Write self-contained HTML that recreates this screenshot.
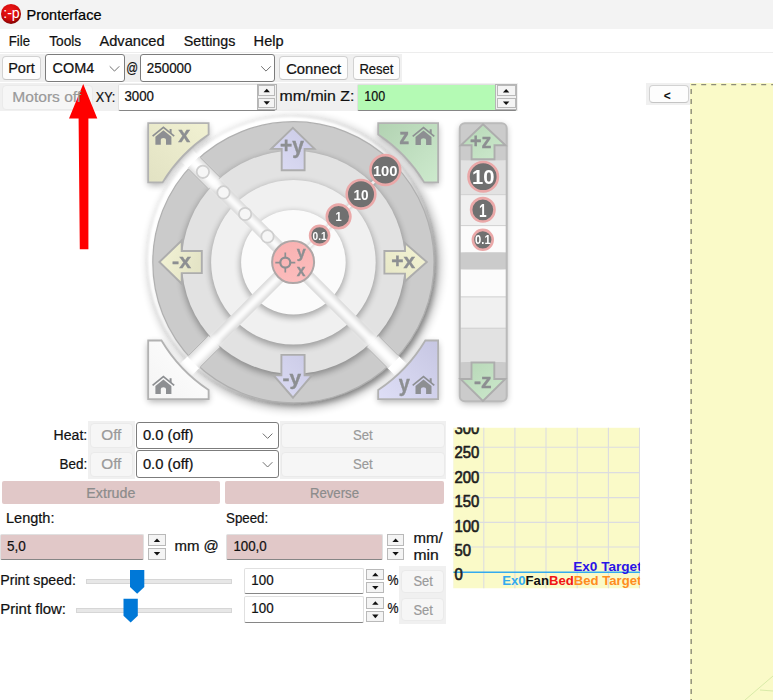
<!DOCTYPE html>
<html><head><meta charset="utf-8"><title>Pronterface</title>
<style>
html,body{margin:0;padding:0;background:#fff;overflow:hidden}
body{width:773px;height:700px;position:relative;font-family:"Liberation Sans",sans-serif}
.b{position:absolute;box-sizing:border-box}
.btn{background:#fdfdfd;border:1px solid #d2d2d2;border-bottom-color:#c4c4c4;border-radius:4px}
.btn.dis{background:#f6f6f6;border-color:#eaeaea}
.combo{background:#fff;border:1px solid #7c7c7c;border-radius:3px}
.spin{background:#fff;border:1px solid #e0e0e0;border-bottom:1.5px solid #868686;border-radius:2px}
.sb{background:#f4f4f4;border:1px solid #b9b9b9}
svg{position:absolute;left:0;top:0}
svg text{font-family:"Liberation Sans",sans-serif}
</style></head><body>
<div class="b " style="left:0px;top:0px;width:773.0px;height:29.0px;background:#f3f3f3"></div>
<div class="b " style="left:0px;top:52px;width:773.0px;height:1.0px;background:#ededed"></div>
<div class="b " style="left:0px;top:54px;width:402.0px;height:28.0px;background:#f0f0f0"></div>
<div class="b " style="left:0px;top:83px;width:518.0px;height:28.0px;background:#f0f0f0"></div>
<div class="b btn" style="left:2px;top:56px;width:39.0px;height:24.0px;"></div>
<div class="b combo" style="left:45px;top:54px;width:80.0px;height:28.0px;"></div>
<div class="b combo" style="left:140px;top:54px;width:135.0px;height:28.0px;"></div>
<div class="b btn" style="left:279px;top:56px;width:69.0px;height:24.0px;"></div>
<div class="b btn" style="left:353px;top:56px;width:47.0px;height:24.0px;"></div>
<div class="b btn dis" style="left:2px;top:85px;width:91.0px;height:25.0px;"></div>
<div class="b spin" style="left:118px;top:84px;width:158.0px;height:27.0px;"></div>
<div class="b spin" style="left:357px;top:84px;width:160.0px;height:27.0px;background:#b4fab4"></div>
<div class="b " style="left:646px;top:83px;width:44.0px;height:22.0px;background:#f0f0f0"></div>
<div class="b btn" style="left:649px;top:85px;width:40.0px;height:18.0px;"></div>
<div class="b " style="left:257px;top:84px;width:20.0px;height:26.0px;background:#f0f0f0;border:1px solid #b5b5b5;box-sizing:border-box"></div>
<div class="b sb" style="left:258px;top:85px;width:17.0px;height:11.0px;"></div>
<div class="b sb" style="left:258px;top:98px;width:17.0px;height:10.0px;"></div>
<div class="b " style="left:495px;top:84px;width:22.0px;height:26.0px;background:#f0f0f0;border:1px solid #b5b5b5;box-sizing:border-box"></div>
<div class="b sb" style="left:497px;top:85px;width:19.0px;height:11.0px;"></div>
<div class="b sb" style="left:497px;top:98px;width:19.0px;height:10.0px;"></div>
<div class="b " style="left:690px;top:83px;width:83.0px;height:617.0px;background:#fafac8"></div>
<div class="b " style="left:88px;top:421px;width:47.0px;height:58.0px;background:#f0f0f0"></div>
<div class="b " style="left:280px;top:421px;width:166.0px;height:58.0px;background:#f0f0f0"></div>
<div class="b btn dis" style="left:90px;top:423px;width:43.0px;height:25.0px;"></div>
<div class="b combo" style="left:136px;top:422px;width:143.0px;height:27.0px;"></div>
<div class="b btn dis" style="left:281px;top:423px;width:164.0px;height:25.0px;"></div>
<div class="b btn dis" style="left:90px;top:452px;width:43.0px;height:25.0px;"></div>
<div class="b combo" style="left:136px;top:450px;width:143.0px;height:28.0px;"></div>
<div class="b btn dis" style="left:281px;top:452px;width:164.0px;height:25.0px;"></div>
<div class="b " style="left:2px;top:481px;width:218.0px;height:23.0px;background:#e1c8c8;border-radius:2px"></div>
<div class="b " style="left:225px;top:481px;width:219.0px;height:23.0px;background:#e1c8c8;border-radius:2px"></div>
<div class="b spin" style="left:0px;top:534px;width:144.0px;height:26.0px;background:#e1c8c8"></div>
<div class="b sb" style="left:148px;top:534px;width:18.0px;height:12.0px;"></div>
<div class="b sb" style="left:148px;top:548px;width:18.0px;height:12.0px;"></div>
<div class="b spin" style="left:226px;top:534px;width:157.0px;height:26.0px;background:#e1c8c8"></div>
<div class="b sb" style="left:387px;top:534px;width:17.0px;height:12.0px;"></div>
<div class="b sb" style="left:387px;top:548px;width:17.0px;height:12.0px;"></div>
<div class="b " style="left:399px;top:566px;width:47.0px;height:58.0px;background:#f0f0f0"></div>
<div class="b " style="left:86px;top:579px;width:146.0px;height:5.0px;background:#e7e7e7;border:1px solid #d6d6d6;box-sizing:border-box"></div>
<div class="b spin" style="left:244px;top:568px;width:120.0px;height:26.0px;"></div>
<div class="b sb" style="left:366px;top:569px;width:18.0px;height:11.0px;"></div>
<div class="b sb" style="left:366px;top:582px;width:18.0px;height:11.0px;"></div>
<div class="b btn dis" style="left:401px;top:570px;width:43.0px;height:23.0px;"></div>
<div class="b " style="left:76px;top:608px;width:156.0px;height:5.0px;background:#e7e7e7;border:1px solid #d6d6d6;box-sizing:border-box"></div>
<div class="b spin" style="left:244px;top:596px;width:120.0px;height:27.0px;"></div>
<div class="b sb" style="left:366px;top:597px;width:18.0px;height:12.0px;"></div>
<div class="b sb" style="left:366px;top:611px;width:18.0px;height:11.0px;"></div>
<div class="b btn dis" style="left:401px;top:598px;width:43.0px;height:23.0px;"></div>
<svg width="773" height="700" viewBox="0 0 773 700">
<defs>
<clipPath id="gclip"><rect x="453.2" y="427.6" width="186.9" height="160.9"/></clipPath>
<radialGradient id="ig" cx="0.45" cy="0.35" r="0.7"><stop offset="0" stop-color="#f01818"/><stop offset="0.6" stop-color="#d40a0a"/><stop offset="1" stop-color="#6e0000"/></radialGradient>
<filter id="sh" x="-20%" y="-20%" width="140%" height="140%"><feGaussianBlur stdDeviation="2.6"/></filter>
<filter id="sh2" x="-30%" y="-30%" width="160%" height="160%"><feGaussianBlur stdDeviation="3.5"/></filter>
<filter id="b1" x="-20%" y="-20%" width="140%" height="140%"><feGaussianBlur stdDeviation="0.8"/></filter>
<filter id="b2" x="-20%" y="-20%" width="140%" height="140%"><feGaussianBlur stdDeviation="2"/></filter>
<filter id="sh3" x="-20%" y="-20%" width="140%" height="140%"><feGaussianBlur stdDeviation="3"/></filter>
<filter id="sh4" x="-20%" y="-20%" width="140%" height="140%"><feGaussianBlur stdDeviation="4"/></filter>
<clipPath id="c1"><circle cx="293.4" cy="262.3" r="170"/></clipPath>
<filter id="b05" x="-30%" y="-30%" width="160%" height="160%"><feGaussianBlur stdDeviation="0.6"/></filter>
<clipPath id="c0"><circle cx="293.4" cy="262.3" r="140.5"/></clipPath>
<linearGradient id="gy" x1="1" y1="0" x2="0" y2="1"><stop offset="0" stop-color="#f1f1d2"/><stop offset="1" stop-color="#e2e2c3"/></linearGradient>
<linearGradient id="gg" x1="0" y1="0" x2="1" y2="1"><stop offset="0" stop-color="#b2d2b2"/><stop offset="1" stop-color="#cdeacd"/></linearGradient>
<linearGradient id="gb" x1="1" y1="0" x2="0" y2="1"><stop offset="0" stop-color="#c6c6e2"/><stop offset="1" stop-color="#dedef6"/></linearGradient>
<linearGradient id="gw" x1="1" y1="0" x2="0" y2="1"><stop offset="0" stop-color="#ffffff"/><stop offset="1" stop-color="#f4f4f4"/></linearGradient>
<linearGradient id="ay" x1="1" y1="0" x2="0" y2="1"><stop offset="0" stop-color="#f4f4d4"/><stop offset="1" stop-color="#e6e6c6"/></linearGradient>
<linearGradient id="ax" x1="0" y1="0" x2="1" y2="0.3"><stop offset="0" stop-color="#f4f4d6"/><stop offset="1" stop-color="#e4e4c6"/></linearGradient>
<linearGradient id="ab" x1="1" y1="0" x2="0" y2="1"><stop offset="0" stop-color="#cacae6"/><stop offset="1" stop-color="#dcdcf4"/></linearGradient>
<linearGradient id="ag" x1="0" y1="0" x2="1" y2="1"><stop offset="0" stop-color="#b6d6b6"/><stop offset="1" stop-color="#cdeacd"/></linearGradient>
<linearGradient id="pk" x1="0" y1="0" x2="0.4" y2="1"><stop offset="0" stop-color="#f8b0b0"/><stop offset="1" stop-color="#fcbcbc"/></linearGradient>
<clipPath id="zc"><rect x="459.8" y="123.2" width="46.9" height="278.1" rx="5"/></clipPath>
<filter id="soft" filterUnits="userSpaceOnUse" x="130" y="105" width="400" height="320"><feGaussianBlur stdDeviation="0.45"/></filter>
</defs>
<g clip-path="url(#gclip)">
<rect x="453.2" y="427.6" width="186.9" height="160.9" fill="#fafac8"/>
<path d="M452.6,427.6 V588.5" stroke="#dcdce0" stroke-width="1.1"/>
<path d="M483.8,427.6 V588.5" stroke="#dcdce0" stroke-width="1.1"/>
<path d="M514.9,427.6 V588.5" stroke="#dcdce0" stroke-width="1.1"/>
<path d="M546.0,427.6 V588.5" stroke="#dcdce0" stroke-width="1.1"/>
<path d="M577.2,427.6 V588.5" stroke="#dcdce0" stroke-width="1.1"/>
<path d="M608.4,427.6 V588.5" stroke="#dcdce0" stroke-width="1.1"/>
<path d="M639.5,427.6 V588.5" stroke="#dcdce0" stroke-width="1.1"/>
<path d="M453.2,447.2 H640.1" stroke="#dcdce0" stroke-width="1.1"/>
<path d="M453.2,472.6 H640.1" stroke="#dcdce0" stroke-width="1.1"/>
<path d="M453.2,497.6 H640.1" stroke="#dcdce0" stroke-width="1.1"/>
<path d="M453.2,522.4 H640.1" stroke="#dcdce0" stroke-width="1.1"/>
<path d="M453.2,547.0 H640.1" stroke="#dcdce0" stroke-width="1.1"/>
<path d="M453.2,572.2 H640.1" stroke="#33aaee" stroke-width="1.5"/>
<text x="454.6" y="434.1" font-size="17" font-weight="normal" fill="#1e1e1e" stroke="#1e1e1e" stroke-width="0.7" textLength="24.8" lengthAdjust="spacingAndGlyphs">300</text>
<text x="454.6" y="457.7" font-size="17" font-weight="normal" fill="#1e1e1e" stroke="#1e1e1e" stroke-width="0.7" textLength="24.8" lengthAdjust="spacingAndGlyphs">250</text>
<text x="454.6" y="483" font-size="17" font-weight="normal" fill="#1e1e1e" stroke="#1e1e1e" stroke-width="0.7" textLength="24.8" lengthAdjust="spacingAndGlyphs">200</text>
<text x="454.6" y="507.2" font-size="17" font-weight="normal" fill="#1e1e1e" stroke="#1e1e1e" stroke-width="0.7" textLength="24.8" lengthAdjust="spacingAndGlyphs">150</text>
<text x="454.6" y="531.6" font-size="17" font-weight="normal" fill="#1e1e1e" stroke="#1e1e1e" stroke-width="0.7" textLength="24.8" lengthAdjust="spacingAndGlyphs">100</text>
<text x="454.6" y="556" font-size="17" font-weight="normal" fill="#1e1e1e" stroke="#1e1e1e" stroke-width="0.7" textLength="16.5" lengthAdjust="spacingAndGlyphs">50</text>
<text x="454.6" y="580.4" font-size="17" font-weight="normal" fill="#1e1e1e" stroke="#1e1e1e" stroke-width="0.7" textLength="8.3" lengthAdjust="spacingAndGlyphs">0</text>
<text x="573.2" y="571" font-size="13.6" font-weight="bold" fill="#2a14e6">Ex0 Target</text>
<text x="502.2" y="585.1" font-size="13.15" font-weight="bold"><tspan fill="#33aaee">Ex0</tspan><tspan fill="#111">Fan</tspan><tspan fill="#f01414">Bed</tspan><tspan fill="#ff8c1e">Bed Target</tspan></text>
</g>
<g filter="url(#soft)">
<circle cx="294.4" cy="263.3" r="146.5" fill="#000" opacity="0.24" filter="url(#sh4)"/>
<circle cx="290.9" cy="259.8" r="143.2" fill="#fff" filter="url(#b1)"/>
<circle cx="295.9" cy="265.3" r="140.6" fill="#000" opacity="0.3" filter="url(#sh)"/>
<circle cx="293.4" cy="262.3" r="140.6" fill="#cbcbcb" stroke="#b0b0b0" stroke-width="1.2"/>
<g clip-path="url(#c0)">
<circle cx="293.4" cy="264.8" r="112.5" fill="#000" opacity="0.30" filter="url(#sh3)"/>
<circle cx="293.4" cy="262.3" r="111.5" fill="#e2e2e2"/>
<circle cx="293.4" cy="264.8" r="83.3" fill="#000" opacity="0.30" filter="url(#sh3)"/>
<circle cx="293.4" cy="262.3" r="82.3" fill="#f0f0f0"/>
<circle cx="293.4" cy="264.8" r="53.3" fill="#000" opacity="0.30" filter="url(#sh3)"/>
<circle cx="293.4" cy="262.3" r="52.3" fill="#fbfbfb"/>
</g>
<path d="M279.4,248.3 L214.2,183.1" stroke="#d8d8d8" stroke-width="13"/>
<path d="M214.2,183.1 L193.3,162.2" stroke="#dcdcdc" stroke-width="16.5"/>
<path d="M193.3,162.2 L180.3,149.2" stroke="#fff" stroke-width="16.5"/>
<path d="M279.4,276.3 L214.2,341.5" stroke="#d8d8d8" stroke-width="13"/>
<path d="M214.2,341.5 L193.3,362.4" stroke="#dcdcdc" stroke-width="16.5"/>
<path d="M193.3,362.4 L180.3,375.4" stroke="#fff" stroke-width="16.5"/>
<path d="M307.4,276.3 L372.6,341.5" stroke="#d8d8d8" stroke-width="13"/>
<path d="M372.6,341.5 L393.5,362.4" stroke="#dcdcdc" stroke-width="16.5"/>
<path d="M393.5,362.4 L406.5,375.4" stroke="#fff" stroke-width="16.5"/>
<g clip-path="url(#c1)">
<path d="M279.4,248.3 L214.2,183.1" stroke="#fff" stroke-width="7" filter="url(#b2)"/>
<path d="M217.0,185.9 L176.0,144.9" stroke="#fff" stroke-width="10" filter="url(#b2)"/>
<path d="M279.4,276.3 L214.2,341.5" stroke="#fff" stroke-width="7" filter="url(#b2)"/>
<path d="M217.0,338.7 L176.0,379.7" stroke="#fff" stroke-width="10" filter="url(#b2)"/>
<path d="M307.4,276.3 L372.6,341.5" stroke="#fff" stroke-width="7" filter="url(#b2)"/>
<path d="M369.8,338.7 L410.8,379.7" stroke="#fff" stroke-width="10" filter="url(#b2)"/>
</g>
<path d="M307.4,248.3 L385.4,170.3" stroke="#000" stroke-opacity="0.10" stroke-width="6" filter="url(#b1)"/>
<path d="M307.4,248.3 L385.4,170.3" stroke="#fff" stroke-opacity="0.8" stroke-width="3" filter="url(#b05)"/>
<path d="M208.4,188.9 L188.6,169.1" stroke="#b4b4b4" stroke-width="1"/>
<path d="M220.0,177.3 L200.2,157.5" stroke="#b4b4b4" stroke-width="1"/>
<path d="M220.0,347.3 L200.2,367.1" stroke="#b4b4b4" stroke-width="1"/>
<path d="M208.4,335.7 L188.6,355.5" stroke="#b4b4b4" stroke-width="1"/>
<path d="M378.4,335.7 L398.2,355.5" stroke="#b4b4b4" stroke-width="1"/>
<path d="M366.8,347.3 L386.6,367.1" stroke="#b4b4b4" stroke-width="1"/>
<circle cx="202.9" cy="171.8" r="6.2" fill="#f6f6f6" stroke="#cfcfcf" stroke-width="1.8" filter="url(#b05)"/>
<circle cx="223.5" cy="192.4" r="6.2" fill="#f6f6f6" stroke="#cfcfcf" stroke-width="1.8" filter="url(#b05)"/>
<circle cx="245.1" cy="214.0" r="6.2" fill="#f6f6f6" stroke="#cfcfcf" stroke-width="1.8" filter="url(#b05)"/>
<circle cx="267.5" cy="236.4" r="6.2" fill="#f6f6f6" stroke="#cfcfcf" stroke-width="1.8" filter="url(#b05)"/>
<path d="M148.2,123.2 H208.6 V134.6 A153.3,153.3 0 0 0 162.6,182.4 H148.2 Z" fill="#000" opacity="0.33" filter="url(#sh2)" transform="translate(0,2.5)"/>
<path d="M148.2,123.2 H208.6 V134.6 A153.3,153.3 0 0 0 162.6,182.4 H148.2 Z" fill="url(#gy)" stroke="#b2b2b2" stroke-width="1.8" stroke-linejoin="miter"/>
<path d="M438.1,123.2 H378.2 V134.6 A153.3,153.3 0 0 1 424.2,182.4 H438.1 Z" fill="#000" opacity="0.33" filter="url(#sh2)" transform="translate(0,2.5)"/>
<path d="M438.1,123.2 H378.2 V134.6 A153.3,153.3 0 0 1 424.2,182.4 H438.1 Z" fill="url(#gg)" stroke="#b2b2b2" stroke-width="1.8" stroke-linejoin="miter"/>
<path d="M148.2,399.1 H208.6 V390.0 A153.3,153.3 0 0 1 161.5,340.5 H148.2 Z" fill="#000" opacity="0.33" filter="url(#sh2)" transform="translate(0,2.5)"/>
<path d="M148.2,399.1 H208.6 V390.0 A153.3,153.3 0 0 1 161.5,340.5 H148.2 Z" fill="url(#gw)" stroke="#b2b2b2" stroke-width="1.8" stroke-linejoin="miter"/>
<path d="M438.1,399.1 H378.2 V390.0 A153.3,153.3 0 0 0 425.3,340.5 H438.1 Z" fill="#000" opacity="0.33" filter="url(#sh2)" transform="translate(0,2.5)"/>
<path d="M438.1,399.1 H378.2 V390.0 A153.3,153.3 0 0 0 425.3,340.5 H438.1 Z" fill="url(#gb)" stroke="#b2b2b2" stroke-width="1.8" stroke-linejoin="miter"/>
<path d="M152.6,136.1 L163.4,127.30000000000001 L174.20000000000002,136.1" fill="none" stroke="#8d8f92" stroke-width="1.7" stroke-linejoin="miter"/>
<path d="M169.6,132.0 V129.0 H171.6 V133.8" fill="#8d8f92"/>
<path d="M163.4,130.20000000000002 L171.4,136.8 V144.70000000000002 H166.0 V139.8 Q166.0,138.0 163.4,138.0 Q160.8,138.0 160.8,139.8 V144.70000000000002 H155.4 V136.8 Z" fill="#8d8f92"/>
<path d="M412.7,136.29999999999998 L423.5,127.5 L434.3,136.29999999999998" fill="none" stroke="#8d8f92" stroke-width="1.7" stroke-linejoin="miter"/>
<path d="M429.7,132.2 V129.2 H431.7 V134.0" fill="#8d8f92"/>
<path d="M423.5,130.4 L431.5,137.0 V144.9 H426.1 V140.0 Q426.1,138.2 423.5,138.2 Q420.9,138.2 420.9,140.0 V144.9 H415.5 V137.0 Z" fill="#8d8f92"/>
<path d="M152.6,385.3 L163.4,376.5 L174.20000000000002,385.3" fill="none" stroke="#8d8f92" stroke-width="1.7" stroke-linejoin="miter"/>
<path d="M169.6,381.20000000000005 V378.20000000000005 H171.6 V383.0" fill="#8d8f92"/>
<path d="M163.4,379.40000000000003 L171.4,386.0 V393.90000000000003 H166.0 V389.0 Q166.0,387.20000000000005 163.4,387.20000000000005 Q160.8,387.20000000000005 160.8,389.0 V393.90000000000003 H155.4 V386.0 Z" fill="#8d8f92"/>
<path d="M412.7,385.3 L423.5,376.5 L434.3,385.3" fill="none" stroke="#8d8f92" stroke-width="1.7" stroke-linejoin="miter"/>
<path d="M429.7,381.20000000000005 V378.20000000000005 H431.7 V383.0" fill="#8d8f92"/>
<path d="M423.5,379.40000000000003 L431.5,386.0 V393.90000000000003 H426.1 V389.0 Q426.1,387.20000000000005 423.5,387.20000000000005 Q420.9,387.20000000000005 420.9,389.0 V393.90000000000003 H415.5 V386.0 Z" fill="#8d8f92"/>
<text x="178.3" y="141.9" font-size="22" font-weight="bold" fill="#8d8f92" stroke="#8d8f92" stroke-width="0.35" textLength="12.0" lengthAdjust="spacingAndGlyphs">x</text>
<text x="399.3" y="143.6" font-size="22" font-weight="bold" fill="#8d8f92" stroke="#8d8f92" stroke-width="0.35" textLength="9.9" lengthAdjust="spacingAndGlyphs">z</text>
<text x="398.7" y="391.1" font-size="22" font-weight="bold" fill="#8d8f92" stroke="#8d8f92" stroke-width="0.35" textLength="11.1" lengthAdjust="spacingAndGlyphs">y</text>
<path d="M292.9,127.9 L314.5,148.9 H304.6 V170.3 H281.7 V148.9 H271.2 Z" fill="url(#ab)" stroke="#adadad" stroke-width="1.9" stroke-linejoin="miter"/>
<text x="279.9" y="152.6" font-size="22" font-weight="bold" fill="#8d8f92" stroke="#8d8f92" stroke-width="0.35" textLength="23.9" lengthAdjust="spacingAndGlyphs">+y</text>
<path d="M293,397.7 L311.8,375.4 H304.6 V354.9 H281.4 V375.4 H273.7 Z" fill="url(#ab)" stroke="#adadad" stroke-width="1.9" stroke-linejoin="miter"/>
<text x="282.5" y="384.8" font-size="20.6" font-weight="bold" fill="#8d8f92" stroke="#8d8f92" stroke-width="0.35" textLength="18.6" lengthAdjust="spacingAndGlyphs">-y</text>
<path d="M159.4,262 L181.7,240.6 V251 H201.8 V273.1 H181.7 V283.8 Z" fill="url(#ax)" stroke="#adadad" stroke-width="1.9" stroke-linejoin="miter"/>
<text x="172.1" y="267.6" font-size="20.6" font-weight="bold" fill="#8d8f92" stroke="#8d8f92" stroke-width="0.35" textLength="19.0" lengthAdjust="spacingAndGlyphs">-x</text>
<path d="M426.8,262 L405,243.1 V251 H384.4 V273.6 H405 V281.3 Z" fill="url(#ay)" stroke="#adadad" stroke-width="1.9" stroke-linejoin="miter"/>
<text x="391.3" y="267.6" font-size="20.6" font-weight="bold" fill="#8d8f92" stroke="#8d8f92" stroke-width="0.35" textLength="24.0" lengthAdjust="spacingAndGlyphs">+x</text>
<circle cx="293.09999999999997" cy="262.1" r="21" fill="url(#pk)" stroke="#aea6a6" stroke-width="2"/>
<circle cx="285.3" cy="262.6" r="5" fill="none" stroke="#8d8f92" stroke-width="2.2"/>
<path d="M275.3,262.6 H280.3 M290.3,262.6 H295.3 M285.3,252.60000000000002 V257.6 M285.3,267.6 V272.6" stroke="#8d8f92" stroke-width="1.7"/>
<text x="296.8" y="257.6" font-size="17" font-weight="bold" fill="#8d8f92" stroke="#8d8f92" stroke-width="0.35" textLength="9.0" lengthAdjust="spacingAndGlyphs">y</text>
<text x="296.8" y="275.8" font-size="17" font-weight="bold" fill="#8d8f92" stroke="#8d8f92" stroke-width="0.35" textLength="8.7" lengthAdjust="spacingAndGlyphs">x</text>
<circle cx="385.3" cy="170" r="14.899999999999999" fill="#6f6f6f" stroke="#eaa8a8" stroke-width="2.6"/>
<text x="372.9" y="175.6" font-size="15.5" font-weight="bold" fill="#fff" textLength="24.7" lengthAdjust="spacingAndGlyphs">100</text>
<circle cx="361" cy="194.3" r="14.299999999999999" fill="#6f6f6f" stroke="#eaa8a8" stroke-width="2.6"/>
<text x="353.4" y="199.5" font-size="14.5" font-weight="bold" fill="#fff" textLength="15.1" lengthAdjust="spacingAndGlyphs">10</text>
<circle cx="338.6" cy="216.4" r="11.799999999999999" fill="#6f6f6f" stroke="#eaa8a8" stroke-width="2.6"/>
<text x="335.5" y="220.70000000000002" font-size="12" font-weight="bold" fill="#fff" textLength="6.2" lengthAdjust="spacingAndGlyphs">1</text>
<circle cx="319.6" cy="235.4" r="9.5" fill="#6f6f6f" stroke="#eaa8a8" stroke-width="2.6"/>
<text x="312.6" y="239.5" font-size="11.5" font-weight="bold" fill="#fff" textLength="14.1" lengthAdjust="spacingAndGlyphs">0.1</text>
<rect x="459.8" y="125.2" width="46.9" height="278.1" rx="5" fill="#000" opacity="0.3" filter="url(#sh2)"/>
<g clip-path="url(#zc)">
<rect x="459.8" y="123.2" width="46.9" height="37.0" fill="#cbcbcb"/>
<rect x="459.8" y="160.2" width="46.9" height="34.5" fill="#e2e2e2"/>
<rect x="459.8" y="194.7" width="46.9" height="30.9" fill="#f0f0f0"/>
<rect x="459.8" y="225.6" width="46.9" height="27.0" fill="#fbfbfb"/>
<rect x="459.8" y="252.6" width="46.9" height="16.8" fill="#cbcbcb"/>
<rect x="459.8" y="269.4" width="46.9" height="27.5" fill="#fbfbfb"/>
<rect x="459.8" y="296.9" width="46.9" height="31.3" fill="#f0f0f0"/>
<rect x="459.8" y="328.2" width="46.9" height="34.3" fill="#e2e2e2"/>
<rect x="459.8" y="362.5" width="46.9" height="38.8" fill="#cbcbcb"/>
<path d="M459.8,194.7 H506.7" stroke="#d2d2d2" stroke-width="1"/>
<path d="M459.8,225.6 H506.7" stroke="#d2d2d2" stroke-width="1"/>
<path d="M459.8,296.9 H506.7" stroke="#d2d2d2" stroke-width="1"/>
<path d="M459.8,328.2 H506.7" stroke="#d2d2d2" stroke-width="1"/>
</g>
<rect x="459.8" y="123.2" width="46.9" height="278.1" rx="5" fill="none" stroke="#bababa" stroke-width="2"/>
<path d="M483,124.3 L505.5,145.3 H494.5 V159.3 H471.6 V145.3 H460.9 Z" fill="url(#ag)" stroke="#adadad" stroke-width="1.9" stroke-linejoin="miter"/>
<text x="470.1" y="147.5" font-size="20" font-weight="bold" fill="#8d8f92" stroke="#8d8f92" stroke-width="0.35" textLength="21.4" lengthAdjust="spacingAndGlyphs">+z</text>
<path d="M482.9,401 L505.3,379 H494.3 V362.5 H471.5 V379 H460.5 Z" fill="url(#ag)" stroke="#adadad" stroke-width="1.9" stroke-linejoin="miter"/>
<text x="473.9" y="388" font-size="20" font-weight="bold" fill="#8d8f92" stroke="#8d8f92" stroke-width="0.35" textLength="17.7" lengthAdjust="spacingAndGlyphs">-z</text>
<circle cx="483.2" cy="176.7" r="14.7" fill="#6f6f6f" stroke="#eaa8a8" stroke-width="2.6"/>
<text x="471.9" y="184.2" font-size="21" font-weight="bold" fill="#fff" textLength="22.5" lengthAdjust="spacingAndGlyphs">10</text>
<circle cx="482.8" cy="209.8" r="11.7" fill="#6f6f6f" stroke="#eaa8a8" stroke-width="2.6"/>
<text x="479.0" y="216.8" font-size="19" font-weight="bold" fill="#fff" textLength="7.6" lengthAdjust="spacingAndGlyphs">1</text>
<circle cx="482.8" cy="239.8" r="9.899999999999999" fill="#6f6f6f" stroke="#eaa8a8" stroke-width="2.6"/>
<text x="475.1" y="243.9" font-size="12" font-weight="bold" fill="#fff" textLength="15.5" lengthAdjust="spacingAndGlyphs">0.1</text>
</g>
<path d="M109.7,66.3 L114.5,71.10000000000001 L119.3,66.3" fill="none" stroke="#707070" stroke-width="1"/>
<path d="M261.2,66.3 L266,71.10000000000001 L270.8,66.3" fill="none" stroke="#707070" stroke-width="1"/>
<path d="M263.55,92.27499999999999 L266.75,88.675 L269.95,92.27499999999999Z" fill="#111"/>
<path d="M263.55,101.22500000000001 L266.75,104.825 L269.95,101.22500000000001Z" fill="#111"/>
<path d="M502.95,92.47500000000001 L506.15,88.87500000000001 L509.34999999999997,92.47500000000001Z" fill="#111"/>
<path d="M502.95,101.425 L506.15,105.02499999999999 L509.34999999999997,101.425Z" fill="#111"/>
<path d="M691.2,84.6 H773" stroke="#8c8c78" stroke-width="1.2" stroke-dasharray="5 5" fill="none"/>
<path d="M691.2,88.9 V700" stroke="#8c8c78" stroke-width="1.4" stroke-dasharray="5 5" fill="none"/>
<path d="M745,700 L773,676 M760,690 L773,691" stroke="#cfe6a0" stroke-width="0.8" fill="none"/>
<path d="M83.2,84 L97.3,118.6 L88.4,118.6 L88.4,249.2 L79.8,249.2 L78.6,118.6 L69,118.6 Z" fill="#ff0000"/>
<path d="M262.8,433.6 L267.6,438.4 L272.40000000000003,433.6" fill="none" stroke="#707070" stroke-width="1"/>
<path d="M262.8,462.20000000000005 L267.6,467.0 L272.40000000000003,462.20000000000005" fill="none" stroke="#707070" stroke-width="1"/>
<path d="M153.8,541.9749999999999 L157.0,538.375 L160.2,541.9749999999999Z" fill="#111"/>
<path d="M153.8,551.9250000000001 L157.0,555.525 L160.2,551.9250000000001Z" fill="#111"/>
<path d="M392.40000000000003,541.9749999999999 L395.6,538.375 L398.8,541.9749999999999Z" fill="#111"/>
<path d="M392.40000000000003,551.9250000000001 L395.6,555.525 L398.8,551.9250000000001Z" fill="#111"/>
<path d="M130,570 H144.3 V587 L137.15,593.8 L130,587 Z" fill="#0078d7"/>
<path d="M372.15000000000003,576.2499999999999 L375.35,572.65 L378.55,576.2499999999999Z" fill="#111"/>
<path d="M372.15000000000003,585.95 L375.35,589.55 L378.55,585.95Z" fill="#111"/>
<path d="M123.5,598.8 H137.8 V615.8 L130.65,622.6 L123.5,615.8 Z" fill="#0078d7"/>
<path d="M372.15000000000003,604.8499999999999 L375.35,601.25 L378.55,604.8499999999999Z" fill="#111"/>
<path d="M372.15000000000003,614.5500000000001 L375.35,618.15 L378.55,614.5500000000001Z" fill="#111"/>
<circle cx="11" cy="13.9" r="10" fill="url(#ig)"/>
<text x="3.2" y="18" font-size="14" font-weight="normal" fill="#fff" textLength="16.6" lengthAdjust="spacingAndGlyphs">:-p</text>
<text x="26.5" y="19.7" font-size="14.5" fill="#000" stroke="#000" stroke-width="0.22" font-weight="normal" text-anchor="start" textLength="75.0" lengthAdjust="spacingAndGlyphs">Pronterface</text>
<text x="8.8" y="45.6" font-size="14" fill="#111" stroke="#111" stroke-width="0.22" font-weight="normal" text-anchor="start" textLength="21.2" lengthAdjust="spacingAndGlyphs">File</text>
<text x="49.2" y="45.6" font-size="14" fill="#111" stroke="#111" stroke-width="0.22" font-weight="normal" text-anchor="start" textLength="32.0" lengthAdjust="spacingAndGlyphs">Tools</text>
<text x="99.4" y="45.6" font-size="14" fill="#111" stroke="#111" stroke-width="0.22" font-weight="normal" text-anchor="start" textLength="65.2" lengthAdjust="spacingAndGlyphs">Advanced</text>
<text x="183.7" y="45.6" font-size="14" fill="#111" stroke="#111" stroke-width="0.22" font-weight="normal" text-anchor="start" textLength="51.7" lengthAdjust="spacingAndGlyphs">Settings</text>
<text x="253.6" y="45.6" font-size="14" fill="#111" stroke="#111" stroke-width="0.22" font-weight="normal" text-anchor="start" textLength="30.0" lengthAdjust="spacingAndGlyphs">Help</text>
<text x="8.2" y="73.2" font-size="14" fill="#111" stroke="#111" stroke-width="0.22" font-weight="normal" text-anchor="start" textLength="26.6" lengthAdjust="spacingAndGlyphs">Port</text>
<text x="52.5" y="72.8" font-size="14" fill="#111" stroke="#111" stroke-width="0.22" font-weight="normal" text-anchor="start" textLength="41.7" lengthAdjust="spacingAndGlyphs">COM4</text>
<text x="126.3" y="73" font-size="14" fill="#111" stroke="#111" stroke-width="0.22" font-weight="normal" text-anchor="start" textLength="11.8" lengthAdjust="spacingAndGlyphs">@</text>
<text x="146.8" y="72.8" font-size="14" fill="#111" stroke="#111" stroke-width="0.22" font-weight="normal" text-anchor="start" textLength="44.7" lengthAdjust="spacingAndGlyphs">250000</text>
<text x="286.2" y="73.6" font-size="14" fill="#111" stroke="#111" stroke-width="0.22" font-weight="normal" text-anchor="start" textLength="55.0" lengthAdjust="spacingAndGlyphs">Connect</text>
<text x="359.4" y="73.6" font-size="14" fill="#111" stroke="#111" stroke-width="0.22" font-weight="normal" text-anchor="start" textLength="34.1" lengthAdjust="spacingAndGlyphs">Reset</text>
<text x="12.3" y="101.6" font-size="14" fill="#9a9a9a" stroke="#9a9a9a" stroke-width="0.22" font-weight="normal" text-anchor="start" textLength="68.9" lengthAdjust="spacingAndGlyphs">Motors off</text>
<text x="95.7" y="101.6" font-size="14" fill="#111" stroke="#111" stroke-width="0.22" font-weight="normal" text-anchor="start" textLength="19.7" lengthAdjust="spacingAndGlyphs">XY:</text>
<text x="124.5" y="101" font-size="14" fill="#111" stroke="#111" stroke-width="0.22" font-weight="normal" text-anchor="start" textLength="29.5" lengthAdjust="spacingAndGlyphs">3000</text>
<text x="279.6" y="101.2" font-size="14" fill="#111" stroke="#111" stroke-width="0.22" font-weight="normal" text-anchor="start" textLength="74.8" lengthAdjust="spacingAndGlyphs">mm/min Z:</text>
<text x="364.3" y="101" font-size="14" fill="#111" stroke="#111" stroke-width="0.22" font-weight="normal" text-anchor="start" textLength="20.9" lengthAdjust="spacingAndGlyphs">100</text>
<text x="667.3" y="99.6" font-size="12" fill="#111" font-weight="bold" text-anchor="middle">&lt;</text>
<text x="53.6" y="440.2" font-size="14" fill="#111" stroke="#111" stroke-width="0.22" font-weight="normal" text-anchor="start" textLength="33.6" lengthAdjust="spacingAndGlyphs">Heat:</text>
<text x="101.2" y="440.2" font-size="14" fill="#9a9a9a" stroke="#9a9a9a" stroke-width="0.22" font-weight="normal" text-anchor="start" textLength="20.2" lengthAdjust="spacingAndGlyphs">Off</text>
<text x="142.9" y="440.2" font-size="14" fill="#111" stroke="#111" stroke-width="0.22" font-weight="normal" text-anchor="start" textLength="50.6" lengthAdjust="spacingAndGlyphs">0.0 (off)</text>
<text x="353" y="440.2" font-size="14" fill="#9a9a9a" stroke="#9a9a9a" stroke-width="0.22" font-weight="normal" text-anchor="start" textLength="19.7" lengthAdjust="spacingAndGlyphs">Set</text>
<text x="59.5" y="468.6" font-size="14" fill="#111" stroke="#111" stroke-width="0.22" font-weight="normal" text-anchor="start" textLength="27.7" lengthAdjust="spacingAndGlyphs">Bed:</text>
<text x="101.2" y="468.6" font-size="14" fill="#9a9a9a" stroke="#9a9a9a" stroke-width="0.22" font-weight="normal" text-anchor="start" textLength="20.2" lengthAdjust="spacingAndGlyphs">Off</text>
<text x="142.9" y="468.6" font-size="14" fill="#111" stroke="#111" stroke-width="0.22" font-weight="normal" text-anchor="start" textLength="50.6" lengthAdjust="spacingAndGlyphs">0.0 (off)</text>
<text x="353" y="468.6" font-size="14" fill="#9a9a9a" stroke="#9a9a9a" stroke-width="0.22" font-weight="normal" text-anchor="start" textLength="19.7" lengthAdjust="spacingAndGlyphs">Set</text>
<text x="86.3" y="498" font-size="14" fill="#8c8c8c" stroke="#8c8c8c" stroke-width="0.22" font-weight="normal" text-anchor="start" textLength="49.1" lengthAdjust="spacingAndGlyphs">Extrude</text>
<text x="309.9" y="498" font-size="14" fill="#8c8c8c" stroke="#8c8c8c" stroke-width="0.22" font-weight="normal" text-anchor="start" textLength="49.1" lengthAdjust="spacingAndGlyphs">Reverse</text>
<text x="6" y="523.2" font-size="14" fill="#111" stroke="#111" stroke-width="0.22" font-weight="normal" text-anchor="start" textLength="48.5" lengthAdjust="spacingAndGlyphs">Length:</text>
<text x="226" y="523.2" font-size="14" fill="#111" stroke="#111" stroke-width="0.22" font-weight="normal" text-anchor="start" textLength="42.2" lengthAdjust="spacingAndGlyphs">Speed:</text>
<text x="7.1" y="550.6" font-size="14" fill="#111" stroke="#111" stroke-width="0.22" font-weight="normal" text-anchor="start" textLength="18.8" lengthAdjust="spacingAndGlyphs">5,0</text>
<text x="174.4" y="551" font-size="14" fill="#111" stroke="#111" stroke-width="0.22" font-weight="normal" text-anchor="start" textLength="44.4" lengthAdjust="spacingAndGlyphs">mm @</text>
<text x="233.4" y="550.6" font-size="14" fill="#111" stroke="#111" stroke-width="0.22" font-weight="normal" text-anchor="start" textLength="33.3" lengthAdjust="spacingAndGlyphs">100,0</text>
<text x="413.5" y="542.6" font-size="14" fill="#111" stroke="#111" stroke-width="0.22" font-weight="normal" text-anchor="start" textLength="29.1" lengthAdjust="spacingAndGlyphs">mm/</text>
<text x="413.5" y="560.4" font-size="14" fill="#111" stroke="#111" stroke-width="0.22" font-weight="normal" text-anchor="start" textLength="25.3" lengthAdjust="spacingAndGlyphs">min</text>
<text x="0.3" y="584.8" font-size="14" fill="#111" stroke="#111" stroke-width="0.22" font-weight="normal" text-anchor="start" textLength="75.6" lengthAdjust="spacingAndGlyphs">Print speed:</text>
<text x="251.3" y="584.8" font-size="14" fill="#111" stroke="#111" stroke-width="0.22" font-weight="normal" text-anchor="start" textLength="22.3" lengthAdjust="spacingAndGlyphs">100</text>
<text x="387.6" y="584.8" font-size="14" fill="#111" stroke="#111" stroke-width="0.22" font-weight="normal" text-anchor="start" textLength="11.0" lengthAdjust="spacingAndGlyphs">%</text>
<text x="413.5" y="586" font-size="14" fill="#9a9a9a" stroke="#9a9a9a" stroke-width="0.22" font-weight="normal" text-anchor="start" textLength="19.3" lengthAdjust="spacingAndGlyphs">Set</text>
<text x="0.3" y="613.7" font-size="14" fill="#111" stroke="#111" stroke-width="0.22" font-weight="normal" text-anchor="start" textLength="65.7" lengthAdjust="spacingAndGlyphs">Print flow:</text>
<text x="251.3" y="613.4" font-size="14" fill="#111" stroke="#111" stroke-width="0.22" font-weight="normal" text-anchor="start" textLength="22.3" lengthAdjust="spacingAndGlyphs">100</text>
<text x="387.6" y="613.4" font-size="14" fill="#111" stroke="#111" stroke-width="0.22" font-weight="normal" text-anchor="start" textLength="11.0" lengthAdjust="spacingAndGlyphs">%</text>
<text x="413.5" y="614.5" font-size="14" fill="#9a9a9a" stroke="#9a9a9a" stroke-width="0.22" font-weight="normal" text-anchor="start" textLength="19.3" lengthAdjust="spacingAndGlyphs">Set</text>
</svg>
</body></html>
